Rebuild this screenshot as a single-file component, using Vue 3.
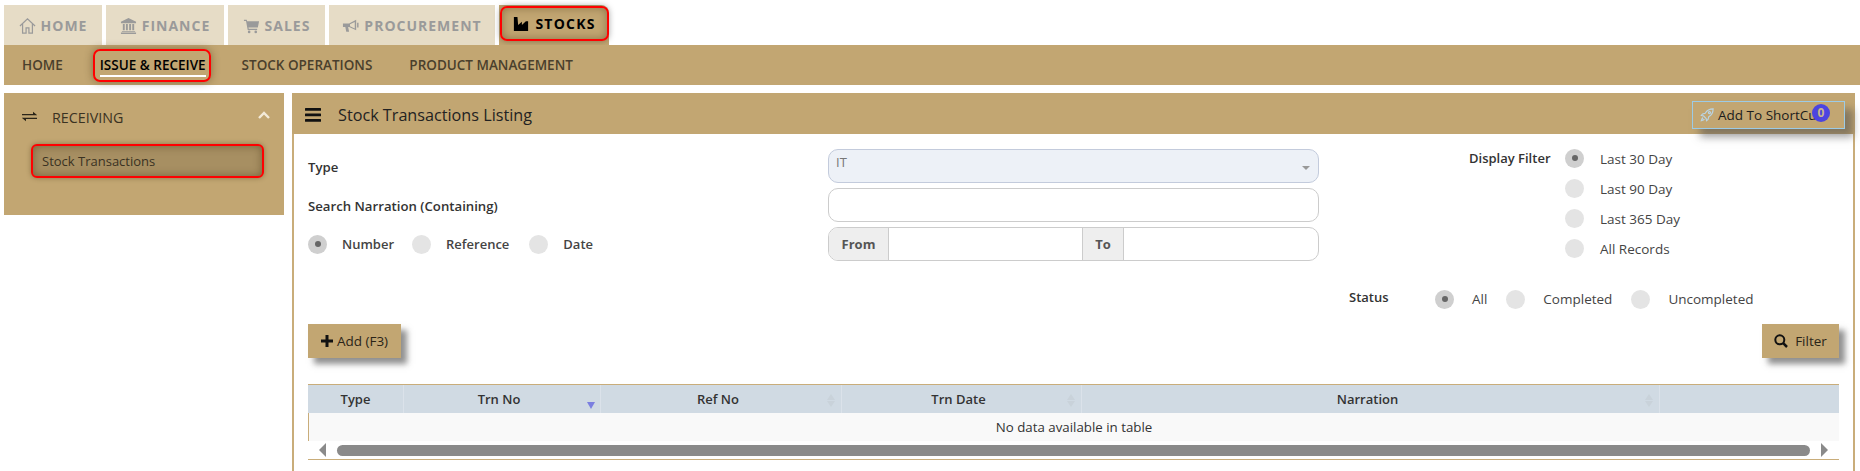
<script setup>
const tabs = [
  { label: 'HOME', icon: 'home', w: 98 },
  { label: 'FINANCE', icon: 'bank', w: 118 },
  { label: 'SALES', icon: 'cart', w: 97 },
  { label: 'PROCUREMENT', icon: 'horn', w: 166 }
]
const subnav = ['HOME', 'ISSUE & RECEIVE', 'STOCK OPERATIONS', 'PRODUCT MANAGEMENT']
const displayFilters = ['Last 30 Day', 'Last 90 Day', 'Last 365 Day', 'All Records']
const columns = [
  { label: 'Type', sort: '' },
  { label: 'Trn No', sort: 'desc' },
  { label: 'Ref No', sort: 'both' },
  { label: 'Trn Date', sort: 'both' },
  { label: 'Narration', sort: 'both' },
  { label: '', sort: '' }
]
</script>

<template>
  <div class="page">
    <nav class="tabs">
      <a v-for="t in tabs" :key="t.label" class="tab" :style="{ width: t.w + 'px' }">
        <svg v-if="t.icon === 'home'" class="ti" viewBox="0 0 18 18" fill="none" stroke="#9a9a9a" stroke-width="1.3">
          <path d="M1 9.500 9 2l8 7.500M3.800 7.500v9.500h3.700v-5.500h3V17h3.700V7.500" />
        </svg>
        <svg v-if="t.icon === 'bank'" class="ti" viewBox="0 0 18 18" fill="#9a9a9a">
          <path d="M9 1 17 5v1.500H1V5zM2 15h14v1H2zM1 16.300h16V18H1zM3 7.500h2V14H3zM6.300 7.500h2V14h-2zM9.700 7.500h2V14h-2zM13 7.500h2V14h-2z" />
        </svg>
        <svg v-if="t.icon === 'cart'" class="ti" viewBox="0 0 18 18" fill="#9a9a9a">
          <path d="M1 3h3l.4 1.500H17l-1.300 6.500H5.800l.3 1.500H15v1.300H5L3.200 4.300H1z" />
          <circle cx="6.500" cy="15.800" r="1.400" /><circle cx="13.500" cy="15.800" r="1.400" />
        </svg>
        <svg v-if="t.icon === 'horn'" class="ti" viewBox="0 0 18 18" fill="#9a9a9a">
          <path d="M1 7h6.500L15 3v11L7.500 10.500H6.500L7.500 15.500H4.500L3.500 10.500H1zM16 6v5h1.500V6zM13.500 5.200l-5 2.500v2l5 2.500z" fill-rule="evenodd" />
        </svg>
        <span>{{ t.label }}</span>
      </a>
      <div class="tab-active-wrap">
        <a class="tab-active">
          <svg class="ti ti-dark" viewBox="0 0 18 18" fill="#000">
            <path d="M1 1h4l.8 9L10 6.500V10l4.500-4H17v11H1z" />
          </svg>
          <span>STOCKS</span>
        </a>
      </div>
    </nav>

    <div class="subnav">
      <a v-for="(s, i) in subnav" :key="s" class="sub-item" :class="{ 'sub-active': i === 1 }">
        <span>{{ s }}</span>
      </a>
    </div>

    <div class="layout">
      <aside class="side">
        <div class="side-head">
          <svg class="ex" viewBox="0 0 15 12" fill="#2a2418">
            <path d="M0 3h11V.8L15 4v.3H0zM15 8H4v2.200L0 7v-.3h15z" />
          </svg>
          <span class="side-title">RECEIVING</span>
          <svg class="chev" viewBox="0 0 12 8" fill="none" stroke="#f3ead8" stroke-width="2.400">
            <path d="M1 7l5-5 5 5" />
          </svg>
        </div>
        <a class="side-item">Stock Transactions</a>
      </aside>

      <main class="main">
        <header class="main-head">
          <svg class="bars" viewBox="0 0 16 14" fill="#111">
            <rect y="0" width="16" height="2.800" rx=".5" /><rect y="5.500" width="16" height="2.800" rx=".5" /><rect y="11" width="16" height="2.800" rx=".5" />
          </svg>
          <h1>Stock Transactions Listing</h1>
          <button class="shortcut">
            <svg class="rocket" viewBox="0 0 16 16" fill="none" stroke="#b9d5e6" stroke-width="1.300">
              <path d="M15 1c-4 0-7 1.500-9 5l-3 .8L1.500 8.500 4 9l3 3 .5 2.500 1.700-1.500.8-3c3.500-2 5-5 5-9z" />
              <circle cx="10.800" cy="5.200" r="1.200" />
              <path d="M3.500 11c-1 .5-1.500 1.500-2 3.500 2-.5 3-1 3.500-2" />
            </svg>
            Add To ShortCut
            <span class="badge">0</span>
          </button>
        </header>

        <div class="body">
          <div class="filters">
            <div class="f-left">
              <label class="f-label">Type</label>
              <label class="f-label">Search Narration (Containing)</label>
              <div class="f-radios">
                <span class="radio on"></span><span class="r-text r1">Number</span>
                <span class="radio"></span><span class="r-text r2">Reference</span>
                <span class="radio"></span><span class="r-text">Date</span>
              </div>
            </div>

            <div class="f-mid">
              <div class="select">
                <span>IT</span>
                <i class="caret"></i>
              </div>
              <div class="input"></div>
              <div class="date-group">
                <span class="addon addon-from">From</span>
                <span class="date-field df1"></span>
                <span class="addon addon-to">To</span>
                <span class="date-field"></span>
              </div>
            </div>

            <div class="f-right">
              <div class="display">
                <span class="d-label">Display Filter</span>
                <div class="d-list">
                  <div v-for="(d, i) in displayFilters" :key="d" class="d-row">
                    <span class="radio" :class="{ on: i === 0 }"></span>
                    <span class="r-text">{{ d }}</span>
                  </div>
                </div>
              </div>
              <div class="status">
                <span class="s-label">Status</span>
                <span class="radio on"></span><span class="r-text s-text s1">All</span>
                <span class="radio"></span><span class="r-text s-text s2">Completed</span>
                <span class="radio"></span><span class="r-text s-text">Uncompleted</span>
              </div>
            </div>
          </div>

          <div class="actions">
            <button class="btn">
              <svg class="plus" viewBox="0 0 12 12" fill="#111"><path d="M4.500 0h3v4.500H12v3H7.500V12h-3V7.500H0v-3h4.500z" /></svg>
              Add (F3)
            </button>
            <button class="btn btn-filter">
              <svg class="search" viewBox="0 0 14 14" fill="none" stroke="#111" stroke-width="2"><circle cx="5.800" cy="5.800" r="4.500" /><path d="M9.200 9.200 13 13" stroke-width="2.500" /></svg>
              Filter
            </button>
          </div>

          <div class="table">
            <div class="thead">
              <div v-for="(c, i) in columns" :key="i" class="th" :class="{ sortable: c.sort }">
                {{ c.label }}
                <i v-if="c.sort === 'desc'" class="sort-desc"></i>
                <span v-if="c.sort === 'both'" class="sort-both"><i></i><i></i></span>
              </div>
            </div>
            <div class="empty">No data available in table</div>
            <div class="scroll">
              <i class="arr-l"></i>
              <div class="thumb"></div>
              <i class="arr-r"></i>
            </div>
          </div>
        </div>
      </main>
    </div>
  </div>
</template>

<style>
html, body { margin: 0; overflow: hidden; background: #fff; }
</style>

<style scoped>
.page {
  width: 1860px;
  height: 471px;
  display: flex;
  flex-direction: column;
  font-family: "Open Sans", "Noto Sans", sans-serif;
  font-size: 13px;
  color: #333;
  overflow: hidden;
  box-sizing: border-box;
  padding-top: 5px;
}
.tabs { display: flex; gap: 4px; height: 40px; padding-left: 4px; }
.tab {
  display: flex; align-items: center; justify-content: center; gap: 5px;
  background: #e6dcc6; color: #9a9a9a;
  font-weight: 700; font-size: 14px; letter-spacing: 1px;
}
.ti { width: 17px; height: 17px; flex: none; }
.ti-dark { width: 16px; height: 16px; }
.tab-active-wrap { width: 110px; height: 40px; background: #c2a672; box-sizing: border-box; padding: 1px 0 4px 1px; border-top-right-radius: 8px; }
.tab-active {
  height: 100%; box-sizing: border-box; display: flex; align-items: center; justify-content: center; gap: 6px;
  border: 2px solid #f00; border-radius: 7px;
  color: #000; font-weight: 700; font-size: 14px; letter-spacing: 1.200px;
  box-shadow: 0 0 6px rgba(0,0,0,.35), inset 0 0 8px rgba(70,50,20,.45);
}
.subnav {
  margin: 0 0 0 4px; height: 40px; background: #c2a672;
  display: flex; align-items: center; padding-left: 18px;
  color: #4a3f2c; font-size: 13.500px; font-weight: 600;
}
.sub-item { margin-right: 37px; white-space: nowrap; }
.sub-active {
  margin-left: -7px; margin-right: 31px;
  height: 33px; box-sizing: border-box; padding: 0 3px 0 5px;
  display: flex; align-items: center;
  border: 2px solid #f00; border-radius: 7px; color: #000;
  box-shadow: 0 0 8px rgba(60,40,10,.45);
}
.sub-active span { border-bottom: 2px solid #fff; line-height: 19px; margin-top: 3px; }

.layout { display: flex; flex: 1; margin-top: 8px; padding-left: 4px; gap: 8px; min-height: 0; }
.side { width: 280px; height: 122px; background: #c2a672; flex: none; box-sizing: border-box; padding: 14px 0 0 27px; }
.side-head { display: flex; align-items: center; height: 20px; color: #3a3222; font-size: 14.300px; }
.ex { width: 15px; height: 12px; flex: none; margin-left: -9px; }
.side-title { margin-left: 15px; }
.chev { width: 12px; height: 8px; margin-left: auto; margin-right: 14px; margin-top: -4px; }
.side-item {
  display: flex; align-items: center; box-sizing: border-box;
  margin-top: 17px; width: 233px; height: 34px; padding-left: 9px;
  background: #a78f62; border: 2px solid #f00; border-radius: 6px;
  font-size: 13px; color: #3a3222;
  box-shadow: 0 0 5px rgba(60,40,10,.4), inset 0 0 8px rgba(60,40,10,.45);
}

.main {
  width: 1563px; flex: none; box-sizing: border-box;
  border-left: 2px solid #c9ad7a; border-right: 2px solid #c9ad7a;
  display: flex; flex-direction: column;
}
.main-head {
  margin: 0 -2px; height: 41px; background: #c2a672; display: flex; align-items: center;
  padding-left: 13px; position: relative; flex: none;
}
.bars { width: 16px; height: 14px; margin-top: 2px; flex: none; }
.main-head h1 { margin: 2px 0 0 17px; font-size: 16.200px; font-weight: 400; color: #222; }
.shortcut {
  margin-left: auto; margin-right: 10px; margin-top: 2px;
  width: 153px; height: 28px; box-sizing: border-box; position: relative;
  display: flex; align-items: center; padding: 0 0 0 7px; gap: 4px;
  background: #c2a672; border: 1px solid #9ccbe6;
  font: 400 13.500px "Open Sans", sans-serif; color: #1c1c1c; white-space: nowrap;
  box-shadow: 8px 8px 8px rgba(80,80,80,.55);
}
.rocket { width: 14px; height: 14px; flex: none; }
.badge {
  position: absolute; left: 119px; top: 2px; width: 18px; height: 18px; border-radius: 50%;
  background: #4c44e0; color: #c9b68d; font-size: 12px; font-weight: 700;
  display: flex; align-items: center; justify-content: center;
}

.body { padding: 9px 14px 0 14px; }
.filters { display: flex; height: 171px; }
.f-left { width: 520px; flex: none; padding-top: 4px; }
.f-label { display: flex; align-items: center; height: 39px; font-size: 13.200px; font-weight: 600; color: #333; }
.f-radios { display: flex; align-items: center; height: 34px; margin-top: 2px; }
.radio {
  width: 19px; height: 19px; border-radius: 50%; background: #e4e4e4; flex: none; position: relative; display: block;
}
.radio.on { background: #cfcfcf; }
.radio.on::after {
  content: ""; position: absolute; left: 6.500px; top: 6.500px; width: 6px; height: 6px; border-radius: 50%; background: #666;
}
.r-text { font-size: 13.500px; color: #444; margin-left: 15px; white-space: nowrap; }
.f-radios .r-text { font-weight: 600; font-size: 13px; }
.r1 { margin-right: 18px; }
.r2 { margin-right: 20px; }

.f-mid { width: 491px; flex: none; padding-top: 6px; display: flex; flex-direction: column; gap: 5px; }
.select, .input, .date-group { height: 34px; box-sizing: border-box; border-radius: 10px; }
.select {
  background: #edf1f7; border: 1px solid #c3cbdc; color: #777; padding: 3px 7px; font-size: 13px; position: relative;
}
.caret {
  position: absolute; right: 8px; top: 16px; width: 0; height: 0;
  border-left: 4px solid transparent; border-right: 4px solid transparent; border-top: 4px solid #999;
}
.input { border: 1px solid #ccc; }
.date-group { border: 1px solid #ccc; display: flex; overflow: hidden; }
.addon {
  background: #eee; color: #555; font-weight: 700; font-size: 13px;
  display: flex; align-items: center; justify-content: center; box-sizing: border-box; flex: none;
}
.addon-from { width: 60px; border-right: 1px solid #ccc; }
.addon-to { width: 42px; border-left: 1px solid #ccc; border-right: 1px solid #ccc; }
.df1 { width: 193px; }
.date-field { display: block; flex: none; }

.f-right { padding-left: 30px; }
.display { display: flex; margin-left: 120px; }
.d-label { width: 96px; flex: none; height: 30px; line-height: 30px; font-weight: 600; font-size: 13px; }
.d-row { display: flex; align-items: center; height: 30px; }
.d-row .r-text { margin-left: 16px; margin-top: 1px; }
.status { display: flex; align-items: center; height: 30px; margin-top: 21px; }
.s-label { width: 86px; flex: none; font-weight: 600; font-size: 13px; margin-top: -4px; }
.s-text { margin-left: 18px; }
.s1 { margin-right: 19px; }
.s2 { margin-right: 19px; }

.actions { display: flex; justify-content: space-between; margin-top: 10px; }
.btn {
  height: 34px; box-sizing: border-box; border: 0; background: #c2a672; display: flex; align-items: center; justify-content: center;
  font: 400 13.500px "Open Sans", sans-serif; color: #2a2418;
  box-shadow: 6px 6px 6px rgba(70,70,70,.6); padding: 0;
  width: 93px; gap: 4px;
}
.btn-filter { width: 77px; gap: 7px; }
.plus { width: 12px; height: 12px; }
.search { width: 14px; height: 14px; }

.table { margin-top: 26px; border-top: 1px solid #c9ad7a; }
.thead { display: grid; grid-template-columns: 96px 197px 241px 240px 578px 179px; background: #d0dae3; height: 28px; }
.th {
  position: relative; display: flex; align-items: center; justify-content: center;
  font-weight: 600; font-size: 13px; color: #333; border-right: 1px solid #dbe2ea;
}
.th.sortable { padding-right: 6px; }
.th:last-child { border-right: 0; }
.sort-desc {
  position: absolute; right: 5px; bottom: 4px; width: 0; height: 0;
  border-left: 4px solid transparent; border-right: 4px solid transparent; border-top: 7px solid #7b7fe0;
}
.sort-both { position: absolute; right: 6px; top: 9px; display: flex; flex-direction: column; gap: 1px; }
.sort-both i { display: block; width: 0; height: 0; border-left: 4px solid transparent; border-right: 4px solid transparent; }
.sort-both i:first-child { border-bottom: 6px solid #c9d2da; }
.sort-both i:last-child { border-top: 6px solid #c9d2da; }
.empty {
  height: 28px; background: #f9f9f9; border-left: 1px solid #c9ad7a; box-sizing: border-box;
  display: flex; align-items: center; justify-content: center; font-size: 13.300px; color: #333;
}
.scroll { height: 19px; box-sizing: border-box; border-bottom: 1px solid #c9ad7a; display: flex; align-items: center; padding: 0 11px; background: #fff; }
.thumb { flex: 1; height: 11px; background: #8a8a8a; border-radius: 6px; margin: 0 11px; }
.arr-l, .arr-r { display: block; width: 0; height: 0; border-top: 7px solid transparent; border-bottom: 7px solid transparent; }
.arr-l { border-right: 7px solid #8a8a8a; }
.arr-r { border-left: 7px solid #8a8a8a; }
</style>
